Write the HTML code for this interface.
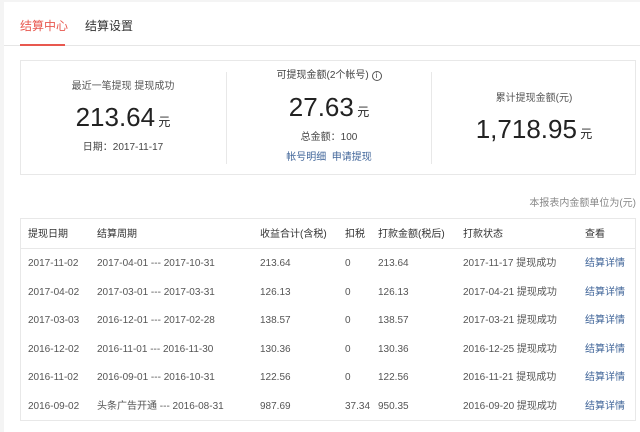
<!DOCTYPE html>
<html><head><meta charset="utf-8"><style>
*{margin:0;padding:0;box-sizing:border-box}
body{width:640px;height:422px;background:#f4f4f4;font-family:"Liberation Sans","Noto Sans CJK SC",sans-serif;color:#333;position:relative;overflow:hidden;line-height:1.2}
.panel{position:absolute;left:4px;top:2px;width:640px;height:430px;background:#fff}
.a{position:absolute;white-space:nowrap}
.c{text-align:center}
.box{position:absolute;left:20px;top:60px;width:616px;height:115px;border:1px solid #e8e8e8}
.tbl{position:absolute;left:20px;top:218px;width:616px;height:203px;border:1px solid #e8e8e8}
.row{position:absolute;left:0;width:100%;height:28px;font-size:10px;color:#555}
.row span{position:absolute;top:7px;line-height:14px;height:14px}
.blue{color:#406599}
</style></head><body>
<div class="panel"></div>
<div class="a" style="left:20px;top:18px;font-size:12px;line-height:16px;color:#e8584f">结算中心</div>
<div class="a" style="left:85px;top:18px;font-size:12px;line-height:16px;color:#333">结算设置</div>
<div class="a" style="left:4px;top:45px;width:636px;height:1px;background:#e6e6e6"></div>
<div class="a" style="left:20px;top:44px;width:45px;height:2px;background:#e8584f"></div>
<div class="box"></div>
<div class="a" style="left:226px;top:72px;width:1px;height:92px;background:#e8e8e8"></div>
<div class="a" style="left:431px;top:72px;width:1px;height:92px;background:#e8e8e8"></div>
<div class="a c" style="left:20px;width:206px;top:81px;font-size:10px;color:#555">最近一笔提现 提现成功</div>
<div class="a c" style="left:20px;width:206px;top:102px;font-size:26px;color:#222">213.64<span style="font-size:12px"> 元</span></div>
<div class="a c" style="left:20px;width:206px;top:142px;font-size:10px;color:#444">日期：2017-11-17</div>
<div class="a c" style="left:227px;width:204px;top:70px;font-size:10px;color:#444">可提现金额(2个帐号) <span style="display:inline-block;width:10px;height:10px;border:1px solid #555;border-radius:50%;font-size:8px;line-height:8px">i</span></div>
<div class="a c" style="left:227px;width:204px;top:92px;font-size:26px;color:#222">27.63<span style="font-size:12px"> 元</span></div>
<div class="a c" style="left:227px;width:204px;top:132px;font-size:10px;color:#444">总金额：100</div>
<div class="a c blue" style="left:227px;width:204px;top:152px;font-size:10px">帐号明细&nbsp;&nbsp;申请提现</div>
<div class="a c" style="left:432px;width:204px;top:93px;font-size:10px;color:#555">累计提现金额(元)</div>
<div class="a c" style="left:432px;width:204px;top:114px;font-size:26px;color:#222">1,718.95<span style="font-size:12px"> 元</span></div>
<div class="a" style="right:4px;top:198px;font-size:10px;color:#888">本报表内金额单位为(元)</div>
<div class="tbl">
<div class="row" style="top:0;height:30px;color:#333;border-bottom:1px solid #e8e8e8"><span style="left:7px;top:9px">提现日期</span><span style="left:76px;top:9px">结算周期</span><span style="left:239px;top:9px">收益合计(含税)</span><span style="left:324px;top:9px">扣税</span><span style="left:357px;top:9px">打款金额(税后)</span><span style="left:442px;top:9px">打款状态</span><span style="left:564px;top:9px">查看</span></div>
<div class="row" style="top:31px"><span style="left:7px">2017-11-02</span><span style="left:76px">2017-04-01 --- 2017-10-31</span><span style="left:239px">213.64</span><span style="left:324px">0</span><span style="left:357px">213.64</span><span style="left:442px">2017-11-17 提现成功</span><span class="blue" style="left:564px">结算详情</span></div>
<div class="row" style="top:59.5px"><span style="left:7px">2017-04-02</span><span style="left:76px">2017-03-01 --- 2017-03-31</span><span style="left:239px">126.13</span><span style="left:324px">0</span><span style="left:357px">126.13</span><span style="left:442px">2017-04-21 提现成功</span><span class="blue" style="left:564px">结算详情</span></div>
<div class="row" style="top:88px"><span style="left:7px">2017-03-03</span><span style="left:76px">2016-12-01 --- 2017-02-28</span><span style="left:239px">138.57</span><span style="left:324px">0</span><span style="left:357px">138.57</span><span style="left:442px">2017-03-21 提现成功</span><span class="blue" style="left:564px">结算详情</span></div>
<div class="row" style="top:116.5px"><span style="left:7px">2016-12-02</span><span style="left:76px">2016-11-01 --- 2016-11-30</span><span style="left:239px">130.36</span><span style="left:324px">0</span><span style="left:357px">130.36</span><span style="left:442px">2016-12-25 提现成功</span><span class="blue" style="left:564px">结算详情</span></div>
<div class="row" style="top:145px"><span style="left:7px">2016-11-02</span><span style="left:76px">2016-09-01 --- 2016-10-31</span><span style="left:239px">122.56</span><span style="left:324px">0</span><span style="left:357px">122.56</span><span style="left:442px">2016-11-21 提现成功</span><span class="blue" style="left:564px">结算详情</span></div>
<div class="row" style="top:173.5px"><span style="left:7px">2016-09-02</span><span style="left:76px">头条广告开通 --- 2016-08-31</span><span style="left:239px">987.69</span><span style="left:324px">37.34</span><span style="left:357px">950.35</span><span style="left:442px">2016-09-20 提现成功</span><span class="blue" style="left:564px">结算详情</span></div>
</div>
</body></html>
